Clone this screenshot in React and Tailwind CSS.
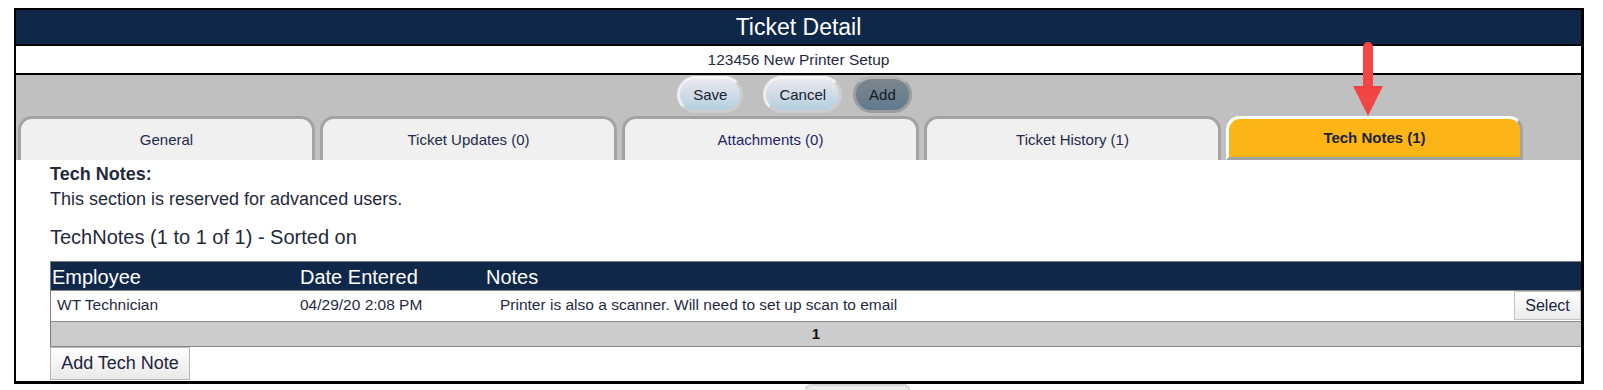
import React from "react";

const tabs = [
  { label: "General" },
  { label: "Ticket Updates (0)" },
  { label: "Attachments (0)", link: true },
  { label: "Ticket History (1)" },
  { label: "Tech Notes (1)", active: true },
];

export default function App() {
  return (
    <div
      className="relative w-[1603px] h-[390px] overflow-hidden bg-white"
      style={{ fontFamily: '"Liberation Sans", Arial, sans-serif' }}
    >
      <div className="ml-[14px] mt-[8px] w-[1570px] border-2 border-r-[3px] border-b-[3px] border-black">
        {/* ======================
            HEADER
        ====================== */}
        <div className="h-[34px] bg-[#0f2849] flex items-center justify-center text-[23px] text-white">
          Ticket Detail
        </div>
        <div className="h-[31px] border-y-2 border-black bg-white flex items-center justify-center text-[15.5px] text-[#1f2a44]">
          123456 New Printer Setup
        </div>

        {/* ======================
            TOOLBAR + TABS
        ====================== */}
        <div className="bg-[#c0c0c0] pt-[1px]">
          <div className="flex justify-center pr-[8px] h-[37px]">
            <PillButton>Save</PillButton>
            <PillButton className="ml-[20px]">Cancel</PillButton>
            <PillButton dark className="ml-[11px]">
              Add
            </PillButton>
          </div>
          <div className="flex gap-[5px] pl-[2px] mt-[3px]">
            {tabs.map((t) => (
              <Tab key={t.label} {...t} />
            ))}
          </div>
        </div>

        {/* ======================
            TECH NOTES
        ====================== */}
        <div className="bg-white pl-[34px] pt-[4px] pb-[1px] text-[#1f2a3c]">
          <div className="text-[18px] leading-[20px] font-bold">Tech Notes:</div>
          <div className="text-[18px] leading-[20px] mt-[5px]">
            This section is reserved for advanced users.
          </div>
          <div className="text-[20px] leading-[24px] mt-[16px]">
            TechNotes (1 to 1 of 1) - Sorted on
          </div>

          <div className="mt-[12px] border-t border-l border-[#7d7d7d]">
            <div className="h-[28px] bg-[#0f2849] text-white text-[20px] grid grid-cols-[249px_186px_1fr] items-center">
              <div className="pl-[1px]">Employee</div>
              <div>Date Entered</div>
              <div>Notes</div>
            </div>
            <div className="h-[31px] border-t border-[#8a8a8a] grid grid-cols-[249px_186px_1fr_auto] items-center text-[15.5px] text-[#1f2a44]">
              <div className="pl-[6px] pb-[2px]">WT Technician</div>
              <div className="pb-[2px]">04/29/20 2:08 PM</div>
              <div className="pl-[14px] pb-[2px]">
                Printer is also a scanner. Will need to set up scan to email
              </div>
              <button className="self-start h-[29px] w-[67px] border border-[#c4c4c4] bg-linear-to-b from-white to-[#ebebeb] text-[16px] text-[#1a2540]">
                Select
              </button>
            </div>
            <div className="h-[26px] border-y border-[#8a8a8a] bg-[#cccccc] flex items-center justify-center text-[15px] font-bold text-[#111]">
              1
            </div>
          </div>
          <button className="h-[33px] w-[140px] border border-[#b8b8b8] bg-linear-to-b from-white to-[#e9e9e9] text-[18px] text-[#1a2540]">
            Add Tech Note
          </button>
        </div>
      </div>

      {/* peek of the next control below the panel */}
      <div className="ml-[805px] w-[105px] h-[6px] rounded-t-full border-t-2 border-x-2 border-[#d6d6d6] bg-[#ececec]" />

      {/* ======================
          ARROW CALLOUT
      ====================== */}
      <svg
        className="absolute left-[1353px] top-[40px]"
        width="30"
        height="78"
        viewBox="0 0 30 78"
      >
        <rect x="10" y="2" width="10" height="50" rx="5" fill="#f44545" />
        <polygon points="0,46 30,46 15,76" fill="#f44545" />
      </svg>
    </div>
  );
}

/* ======================
   PILL BUTTON
====================== */
function PillButton({ children, dark, className = "" }) {
  const look = dark
    ? "border-[#9c9c9c] border-t-[#b4b4b4] bg-linear-to-b from-[#7d868d] to-[#5e7b8f] text-[#141a22]"
    : "border-[#cdcdcd] border-t-[#f4f4f4] border-l-[#eeeeee] bg-linear-to-b from-[#ebe8f0] to-[#b3cfdd] text-[#1a2030]";
  return (
    <button
      className={`h-[37px] px-[13px] rounded-full border-[3px] text-[15px] leading-none ${look} ${className}`}
    >
      {children}
    </button>
  );
}

/* ======================
   TAB
====================== */
function Tab({ label, active, link }) {
  if (active) {
    return (
      <div className="w-[297px] h-[44px] rounded-t-[14px] border-[3px] border-t-white border-l-white border-r-[#a3a3a3] border-b-[#a3a3a3] bg-[#fdb515] flex items-center justify-center text-[15px] font-bold text-[#1b2340]">
        {label}
      </div>
    );
  }
  return (
    <div
      className={`w-[297px] h-[44px] rounded-t-[14px] border-[3px] border-b-0 border-[#a3a3a3] bg-[#f0f0f0] flex items-center justify-center pt-[1px] text-[15px] ${
        link ? "text-[#1d1f6e]" : "text-[#1f2a4d]"
      }`}
    >
      {label}
    </div>
  );
}
